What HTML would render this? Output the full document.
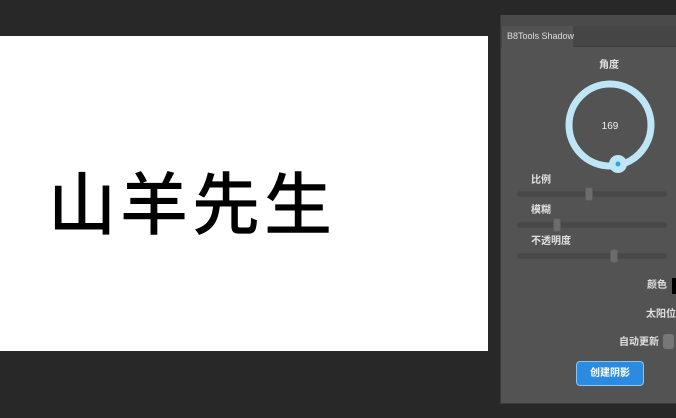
<!DOCTYPE html>
<html><head><meta charset="utf-8"><style>
*{margin:0;padding:0;box-sizing:border-box}
body{width:676px;height:418px;background:#282828;position:relative;overflow:hidden;font-family:"Liberation Sans","Noto Sans CJK SC",sans-serif}
.a{position:absolute}
.lbl{position:absolute;color:#e0e0e0;font-size:10px;font-weight:bold;line-height:12px;white-space:nowrap}
.track{position:absolute;left:517px;width:150px;height:6px;border-radius:3px;background:#484848;border:1px solid #4a4a4a}
.thumb{position:absolute;width:8px;height:14px;border-radius:2px;background:#6c6c6c;border:1px solid #5a5a5a}
</style></head><body>
<div class="a" style="left:0;top:36px;width:488px;height:315px;background:#fff"></div>
<div class="a" style="left:48px;top:160px;font-size:68px;line-height:80px;color:#000;font-family:'Noto Sans CJK SC',sans-serif;font-weight:500;letter-spacing:4px;white-space:nowrap">山羊先生</div>
<div class="a" style="left:500px;top:15px;width:176px;height:389px;background:#535353;border-left:1px solid #3a3a3a;border-bottom:1px solid #3a3a3a"></div>
<div class="a" style="left:501px;top:15px;width:175px;height:11px;background:#4a4a4a"></div>
<div class="a" style="left:501px;top:26px;width:175px;height:21px;background:#454545;border-bottom:1px solid #3c3c3c"></div>
<div class="a" style="left:502px;top:26px;width:71px;height:21px;background:#535353;color:#ddd;font-size:9px;line-height:20px;padding-left:5px;white-space:nowrap">B8Tools Shadow</div>
<div class="lbl" style="left:599px;top:60px">角度</div>
<svg class="a" style="left:560px;top:75px" width="100" height="100"><circle cx="50" cy="50" r="41" fill="none" stroke="#bfe6f6" stroke-width="7"/><circle cx="58" cy="89" r="9" fill="#bfe6f6"/><circle cx="58" cy="89" r="2.5" fill="#2aa7e6"/><text x="50" y="54" fill="#eee" font-size="10" text-anchor="middle" font-family="Liberation Sans">169</text></svg>
<div class="lbl" style="left:531px;top:175px">比例</div>
<div class="track" style="top:191px"></div><div class="thumb" style="left:585px;top:187px"></div>
<div class="lbl" style="left:531px;top:205px">模糊</div>
<div class="track" style="top:222px"></div><div class="thumb" style="left:553px;top:218px"></div>
<div class="lbl" style="left:531px;top:236px">不透明度</div>
<div class="track" style="top:253px"></div><div class="thumb" style="left:610px;top:249px"></div>
<div class="lbl" style="left:647px;top:280px">颜色</div>
<div class="a" style="left:672px;top:278px;width:4px;height:16px;background:#000"></div>
<div class="lbl" style="left:646px;top:309px">太阳位</div>
<div class="lbl" style="left:619px;top:337px">自动更新</div>
<div class="a" style="left:663px;top:334px;width:11px;height:15px;background:#777;border-radius:3px"></div>
<div class="a" style="left:576px;top:361px;width:68px;height:25px;background:#2b8be0;border:1px solid #8cc4f0;border-radius:4px;color:#fff;font-size:10px;font-weight:bold;text-align:center;line-height:23px">创建阴影</div>
</body></html>
